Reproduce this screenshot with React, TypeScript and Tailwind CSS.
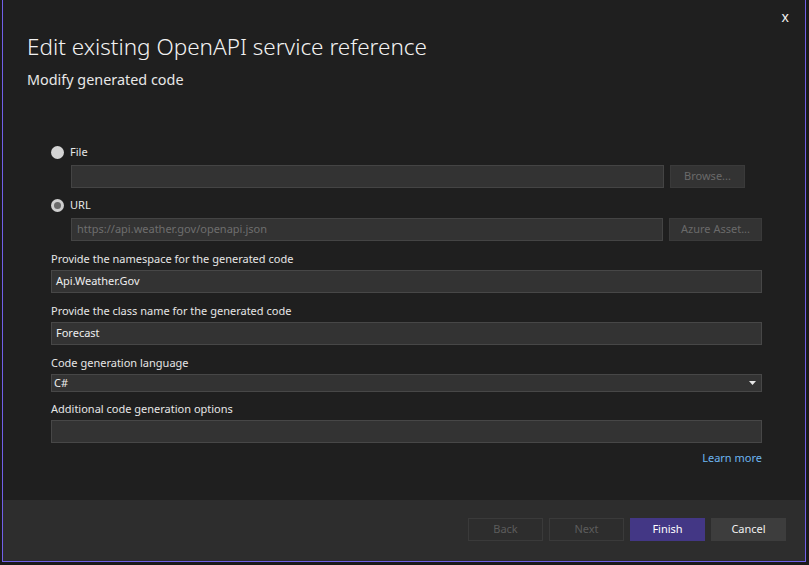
import React from "react";

const font = { fontFamily: '"Noto Sans", "Open Sans", sans-serif' };

const Radio = ({ checked }: { checked?: boolean }) =>
    checked ? (
        <span className="flex h-[13px] w-[13px] items-center justify-center rounded-full bg-[#cfcfcf]">
            <span className="h-[7px] w-[7px] rounded-full bg-[#6a6a6a]" />
        </span>
    ) : (
        <span className="h-[13px] w-[13px] rounded-full bg-[#d4d4d4]" />
    );

const Label = ({ children }: { children: React.ReactNode }) => (
    <div className="text-[11px] leading-[16px] text-[#e6e6e6]">{children}</div>
);

const Field = ({ value, className = "" }: { value?: string; className?: string }) => (
    <div className={"flex h-[23px] items-center border border-[#474747] bg-[#333333] px-[4px] text-[11px] text-[#eeeeee] " + className}>
        {value}
    </div>
);

const App = () => {
    return (
        <div className="h-[565px] w-[809px] bg-[#1a1a1a]" style={font}>
            <div className="ml-[2px] flex h-[562px] w-[804px] flex-col border-x border-b border-[#7160e8] bg-[#1f1f1f]">
                <div className="relative px-[24px] pt-[30px]">
                    <span className="absolute right-[16px] top-[6px] text-[14px] text-[#f0f0f0]">x</span>
                    <div className="text-[22.5px] font-light leading-[34px] text-[#f2f2f2]">
                        Edit existing OpenAPI service reference
                    </div>
                    <div className="mt-[6px] text-[14.4px] leading-[20px] text-[#e8e8e8]">Modify generated code</div>
                </div>

                <div className="flex-1 pl-[48px] pr-[43px] pt-[54px]">
                    <div className="flex items-center gap-[6px]">
                        <Radio />
                        <span className="text-[11px] leading-[16px] text-[#e6e6e6]">File</span>
                    </div>
                    <div className="ml-[20px] mt-[5px] flex gap-[6px] pr-[17px]">
                        <div className="h-[23px] flex-1 border border-[#444444] bg-[#333333]" />
                        <button className="h-[23px] w-[75px] border border-[#3a3a3a] bg-[#333333] text-[11px] text-[#6a6a6a]">
                            Browse...
                        </button>
                    </div>
                    <div className="mt-[9px] flex items-center gap-[6px]">
                        <Radio checked />
                        <span className="text-[11px] leading-[16px] text-[#e6e6e6]">URL</span>
                    </div>
                    <div className="ml-[20px] mt-[5px] flex gap-[6px]">
                        <div className="flex h-[23px] flex-1 items-center border border-[#444444] bg-[#333333] px-[5px] text-[11px] text-[#6e6e6e]">
                            https://api.weather.gov/openapi.json
                        </div>
                        <button className="h-[23px] w-[93px] border border-[#3a3a3a] bg-[#333333] text-[11px] text-[#6a6a6a]">
                            Azure Asset...
                        </button>
                    </div>

                    <div className="mt-[10px]">
                        <Label>Provide the namespace for the generated code</Label>
                        <Field value="Api.Weather.Gov" className="mt-[3px]" />
                    </div>
                    <div className="mt-[10px]">
                        <Label>Provide the class name for the generated code</Label>
                        <Field value="Forecast" className="mt-[3px]" />
                    </div>
                    <div className="mt-[10px]">
                        <Label>Code generation language</Label>
                        <div className="mt-[3px] flex h-[18px] items-center justify-between border border-[#474747] bg-[#333333] pl-[2px] pr-[5px] text-[11px] text-[#eeeeee]">
                            <span>C#</span>
                            <svg width="7" height="4" viewBox="0 0 7 4">
                                <path d="M0 0h7L3.5 4z" fill="#e6e6e6" />
                            </svg>
                        </div>
                    </div>
                    <div className="mt-[9px]">
                        <Label>Additional code generation options</Label>
                        <Field className="mt-[3px]" />
                    </div>
                    <div className="mt-[7px] text-right text-[11px] leading-[16px] text-[#6cb4f0]">Learn more</div>
                </div>

                <div className="flex h-[61px] justify-end gap-[6px] bg-[#2d2d2d] pr-[19px] pt-[18px]">
                    <button className="h-[23px] w-[75px] border border-[#3a3a3a] text-[11px] text-[#5c5c5c]">Back</button>
                    <button className="h-[23px] w-[75px] border border-[#3a3a3a] text-[11px] text-[#5c5c5c]">Next</button>
                    <button className="h-[23px] w-[75px] bg-[#433785] text-[11px] text-[#ffffff]">Finish</button>
                    <button className="h-[23px] w-[75px] bg-[#3d3d3d] text-[11px] text-[#f0f0f0]">Cancel</button>
                </div>
            </div>
        </div>
    );
};

export default App;
